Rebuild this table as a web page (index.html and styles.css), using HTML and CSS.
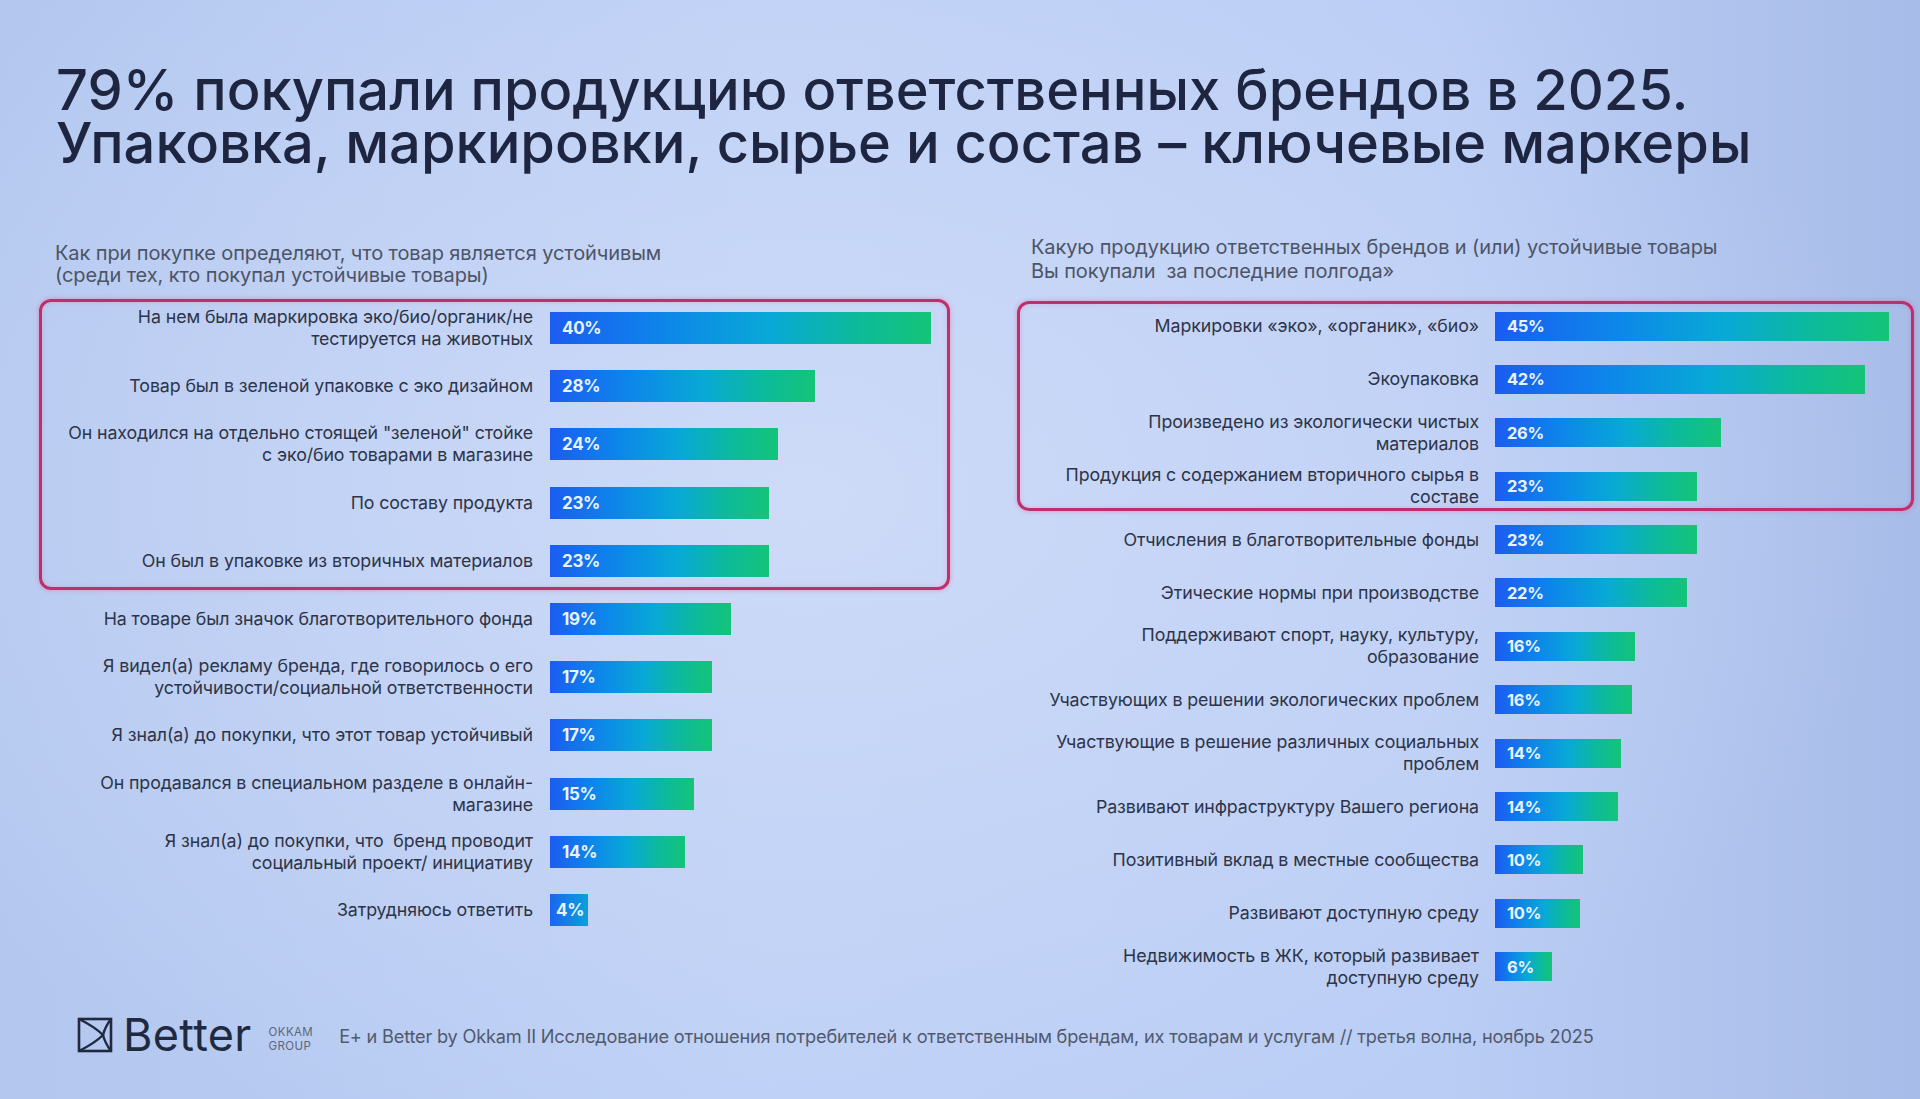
FILE: index.html
```html
<!DOCTYPE html>
<html lang="ru">
<head>
<meta charset="utf-8">
<title>Better by Okkam</title>
<link rel="stylesheet" href="styles.css">
</head>
<body>
<div class="slide">
  <h1 class="title"><span class="title-line">79% покупали продукцию ответственных брендов в 2025.</span><span class="title-line">Упаковка, маркировки, сырье и состав – ключевые маркеры</span></h1>

  <div class="charts">
    <section class="chart chart-left">
      <p class="subtitle">Как при покупке определяют, что товар является устойчивым<br>(среди тех, кто покупал устойчивые товары)</p>
      <div class="rows">
        <div class="highlight">
          <div class="row"><span class="label">На нем была маркировка эко/био/органик/не<br>тестируется на животных</span><div class="bar" style="width:381px"><span>40%</span></div></div>
          <div class="row"><span class="label">Товар был в зеленой упаковке с эко дизайном</span><div class="bar" style="width:265px"><span>28%</span></div></div>
          <div class="row"><span class="label">Он находился на отдельно стоящей "зеленой" стойке<br>с эко/био товарами в магазине</span><div class="bar" style="width:228px"><span>24%</span></div></div>
          <div class="row"><span class="label">По составу продукта</span><div class="bar" style="width:219px"><span>23%</span></div></div>
          <div class="row"><span class="label">Он был в упаковке из вторичных материалов</span><div class="bar" style="width:219px"><span>23%</span></div></div>
        </div>
        <div class="row"><span class="label">На товаре был значок благотворительного фонда</span><div class="bar" style="width:181px"><span>19%</span></div></div>
        <div class="row"><span class="label">Я видел(а) рекламу бренда, где говорилось о его<br>устойчивости/социальной ответственности</span><div class="bar" style="width:162px"><span>17%</span></div></div>
        <div class="row"><span class="label">Я знал(а) до покупки, что этот товар устойчивый</span><div class="bar" style="width:162px"><span>17%</span></div></div>
        <div class="row"><span class="label">Он продавался в специальном разделе в онлайн-<br>магазине</span><div class="bar" style="width:144px"><span>15%</span></div></div>
        <div class="row"><span class="label">Я знал(а) до покупки, что&nbsp; бренд проводит<br>социальный проект/ инициативу</span><div class="bar" style="width:135px"><span>14%</span></div></div>
        <div class="row"><span class="label">Затрудняюсь ответить</span><div class="bar bar-small" style="width:38px"><span>4%</span></div></div>
      </div>
    </section>

    <section class="chart chart-right">
      <p class="subtitle">Какую продукцию ответственных брендов и (или) устойчивые товары<br>Вы покупали&nbsp; за последние полгода»</p>
      <div class="rows">
        <div class="highlight">
          <div class="row"><span class="label">Маркировки «эко», «органик», «био»</span><div class="bar" style="width:394px"><span>45%</span></div></div>
          <div class="row"><span class="label">Экоупаковка</span><div class="bar" style="width:370px"><span>42%</span></div></div>
          <div class="row"><span class="label">Произведено из экологически чистых<br>материалов</span><div class="bar" style="width:226px"><span>26%</span></div></div>
          <div class="row"><span class="label">Продукция с содержанием вторичного сырья в<br>составе</span><div class="bar" style="width:202px"><span>23%</span></div></div>
        </div>
        <div class="row"><span class="label">Отчисления в благотворительные фонды</span><div class="bar" style="width:202px"><span>23%</span></div></div>
        <div class="row"><span class="label">Этические нормы при производстве</span><div class="bar" style="width:192px"><span>22%</span></div></div>
        <div class="row"><span class="label">Поддерживают спорт, науку, культуру,<br>образование</span><div class="bar" style="width:140px"><span>16%</span></div></div>
        <div class="row"><span class="label">Участвующих в решении экологических проблем</span><div class="bar" style="width:137px"><span>16%</span></div></div>
        <div class="row"><span class="label">Участвующие в решение различных социальных<br>проблем</span><div class="bar" style="width:126px"><span>14%</span></div></div>
        <div class="row"><span class="label">Развивают инфраструктуру Вашего региона</span><div class="bar" style="width:123px"><span>14%</span></div></div>
        <div class="row"><span class="label">Позитивный вклад в местные сообщества</span><div class="bar" style="width:88px"><span>10%</span></div></div>
        <div class="row"><span class="label">Развивают доступную среду</span><div class="bar" style="width:85px"><span>10%</span></div></div>
        <div class="row"><span class="label">Недвижимость в ЖК, который развивает<br>доступную среду</span><div class="bar" style="width:57px"><span>6%</span></div></div>
      </div>
    </section>
  </div>

  <footer class="footer">
    <div class="logo">
      <svg class="logo-icon" viewBox="0 0 36 36" aria-hidden="true">
        <rect x="2" y="2" width="32" height="32" fill="none" stroke="#1f2a40" stroke-width="2.6"/>
        <path d="M2 2 Q18 10 26 18 Q18 26 2 34" fill="none" stroke="#1f2a40" stroke-width="2.4"/>
        <path d="M34 2 Q28 10 26 18 Q28 26 34 34" fill="none" stroke="#1f2a40" stroke-width="2.4"/>
      </svg>
      <span class="logo-text">Better</span>
      <span class="logo-group">OKKAM<br>GROUP</span>
    </div>
    <p class="source">E+ и Better by Okkam II Исследование отношения потребителей к ответственным брендам, их товарам и услугам // третья волна, ноябрь 2025</p>
  </footer>
</div>
</body>
</html>
```

FILE: styles.css
```css
* { box-sizing: border-box; }

html, body {
  margin: 0;
  padding: 0;
}

body {
  width: 1920px;
  height: 1099px;
  overflow: hidden;
  font-family: Inter, "Noto Sans", "Liberation Sans", sans-serif;
  color: #2c3347;
  background:
    radial-gradient(ellipse 1100px 700px at 42% 45%, rgba(208, 220, 248, 0.85), rgba(208, 220, 248, 0) 100%),
    linear-gradient(90deg, #b3c7ef 0%, #bdd0f6 40%, #bacdf5 75%, #a7bce8 100%);
}

.slide {
  width: 1920px;
  height: 1099px;
  display: flex;
  flex-direction: column;
  padding-top: 64px;
}

.title {
  margin: 0 0 0 56px;
  display: flex;
  flex-direction: column;
  font-size: 56px;
  font-weight: 500;
  color: #1e2540;
  letter-spacing: 0;
}

.title-line {
  display: block;
  height: 53px;
  line-height: 53px;
  white-space: nowrap;
}

.charts {
  display: flex;
  align-items: flex-start;
  margin-top: 65px;
}

.chart {
  display: flex;
  flex-direction: column;
}

.chart-left {
  margin-left: 42px;
  width: 905px;
  padding-top: 7px;
}

.chart-right {
  margin-left: 73px;
  width: 891px;
}

.subtitle {
  margin: 0;
  font-size: 20px;
  color: #4c5467;
  letter-spacing: -0.1px;
  white-space: nowrap;
}

.chart-left .subtitle {
  padding-left: 13px;
  line-height: 22px;
  margin-bottom: 16px;
}

.chart-right .subtitle {
  padding-left: 11px;
  line-height: 24px;
  margin-bottom: 21px;
}

.rows,
.highlight {
  display: flex;
  flex-direction: column;
}

.chart-left .rows,
.chart-left .highlight { gap: 6.2px; }

.chart-right .rows,
.chart-right .highlight { gap: 9.4px; }

.highlight {
  margin: -3px -3px;
  border: 3px solid #c12f6b;
  border-radius: 12px;
  box-shadow: 0 0 5px rgba(226, 70, 150, 0.45), inset 0 0 4px rgba(226, 70, 150, 0.25);
}

.row {
  display: grid;
  align-items: center;
}

.chart-left .row {
  grid-template-columns: 491px 1fr;
  column-gap: 17px;
  height: 52px;
}

.chart-right .row {
  grid-template-columns: 459px 1fr;
  column-gap: 16px;
  height: 44px;
}

.label {
  text-align: right;
  font-size: 17.8px;
  line-height: 22px;
  color: #2d3448;
  letter-spacing: -0.1px;
  white-space: nowrap;
}

.bar {
  display: flex;
  align-items: center;
  padding-left: 12px;
  background: linear-gradient(90deg, #1b5cf1 0%, #0d86ea 30%, #08a9d6 58%, #0cba9c 80%, #14c478 100%);
  color: #e8f3ff;
  font-weight: 700;
  letter-spacing: -0.3px;
}

.chart-left .bar {
  height: 32px;
  font-size: 17px;
}

.chart-right .bar {
  height: 29px;
  font-size: 16.5px;
}

.bar-small {
  padding-left: 6px;
  background: linear-gradient(90deg, #1b66ef 0%, #0aa0dc 100%);
}

.footer {
  display: flex;
  align-items: center;
  margin-top: 24px;
  padding-left: 77px;
  height: 44px;
}

.logo {
  display: flex;
  align-items: center;
}

.logo-icon {
  width: 36px;
  height: 36px;
}

.logo-text {
  margin-left: 10px;
  font-size: 45px;
  line-height: 44px;
  font-weight: 400;
  color: #1f2a40;
  letter-spacing: 0.3px;
}

.logo-group {
  margin-left: 17px;
  font-size: 11.5px;
  line-height: 14px;
  color: #5e6679;
  letter-spacing: 0.4px;
  padding-top: 8px;
}

.source {
  margin: 0 0 0 26px;
  font-size: 18.2px;
  color: #515a6e;
  letter-spacing: -0.2px;
  padding-top: 3px;
  white-space: nowrap;
}
```
